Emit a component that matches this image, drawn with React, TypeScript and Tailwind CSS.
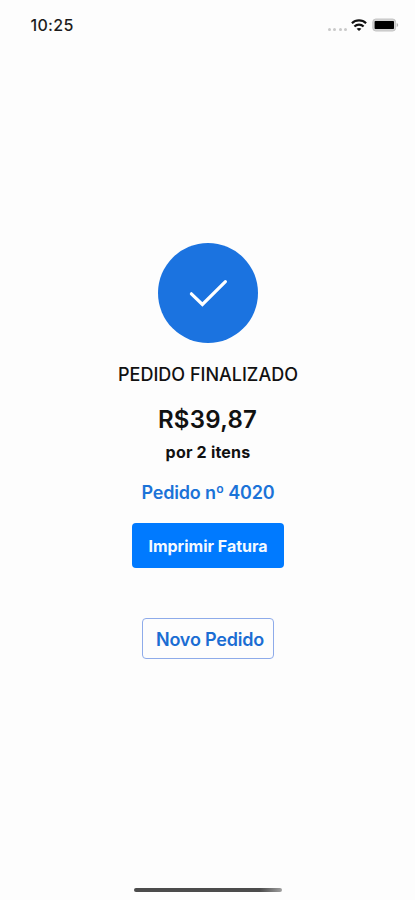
import type { ReactNode } from "react";

function StatusBar() {
  return (
    <header className="flex h-[51px] items-center justify-between pl-[30.5px] pr-[16px] text-[#1c1c1c]">
      <time className="pb-[2px] text-[16px] font-medium leading-5 tracking-[0.3px]">10:25</time>
      <div className="flex items-center">
        <div className="mr-[4px] mt-[7px] flex gap-[2.4px]">
          <span className="size-[3px] rounded-full bg-[#c9c9c9]" />
          <span className="size-[3px] rounded-full bg-[#c9c9c9]" />
          <span className="size-[3px] rounded-full bg-[#c9c9c9]" />
          <span className="size-[3px] rounded-full bg-[#c9c9c9]" />
        </div>
        <svg width="16" height="12" viewBox="0 0 16 12" fill="none" stroke="#111" strokeWidth="2.2" className="mb-[2px] mr-[5px]">
          <path d="M.9 4.2c3.9-3.7 10.3-3.7 14.2 0" />
          <path d="M3.4 7.5c2.6-2.4 6.6-2.4 9.2 0" />
          <path d="M8 12 5.6 9.7c1.2-1.1 3.6-1.1 4.8 0Z" fill="#111" stroke="none" />
        </svg>
        <svg width="27" height="14" viewBox="0 0 27 14" className="mb-[2px]">
          <rect x=".8" y="1" width="22.8" height="12" rx="3" fill="#d4d4d4" stroke="#c4c4c4" />
          <rect x="2.6" y="3" width="19.4" height="8" rx=".8" fill="#000" />
          <path d="M24.7 5v4c2-.7 2-3.3 0-4Z" fill="#b5b5b5" />
        </svg>
      </div>
    </header>
  );
}

function Line({ className, children }: { className: string; children: ReactNode }) {
  return <p className={`whitespace-nowrap ${className}`}>{children}</p>;
}

export default function App() {
  return (
    <div className="flex h-[900px] w-full flex-col bg-[#fdfdfd] font-['Inter','Liberation_Sans',sans-serif] text-[#111]">
      <StatusBar />
      <main className="flex flex-1 flex-col items-center pl-px pt-[192px]">
        <div className="flex size-[100px] shrink-0 items-center justify-center rounded-full bg-[#1b73e0]">
          <svg width="40" height="30" viewBox="0 0 40 30" fill="none" stroke="white" strokeWidth="3.2" strokeLinecap="round" strokeLinejoin="miter">
            <path d="M3.4 15.8 L14.4 26.4 L37.4 3.6" />
          </svg>
        </div>
        <Line className="mt-[20px] text-[18px] font-medium leading-6">PEDIDO FINALIZADO</Line>
        <Line className="mt-[17px] pr-[1px] text-[24px] font-semibold leading-8 tracking-[0.25px]">R$39,87</Line>
        <Line className="mt-[4px] text-[16px] font-bold leading-6 tracking-[0.2px]">por 2 itens</Line>
        <Line className="mt-[17px] text-[18px] font-semibold leading-6 tracking-[-0.2px] text-[#1b73d8]">Pedido nº 4020</Line>
        <button className="mt-[18px] flex h-[45px] w-[152px] items-center justify-center whitespace-nowrap rounded-[4px] bg-[#007aff] text-[16px] font-bold text-[#f4f9ff]">
          Imprimir Fatura
        </button>
        <button className="mt-[50px] flex h-[41px] w-[132px] items-center justify-center whitespace-nowrap rounded-[4px] border border-[#8eabea] pl-[4px] pt-px text-[18px] font-semibold tracking-[-0.2px] text-[#1b6dd3]">
          Novo Pedido
        </button>
      </main>
      <footer className="flex justify-center pb-[8px]">
        <div className="h-[4px] w-[148px] rounded-full bg-linear-to-r from-[#4c4c4c] from-85% to-[#a0a0a0]" />
      </footer>
    </div>
  );
}
